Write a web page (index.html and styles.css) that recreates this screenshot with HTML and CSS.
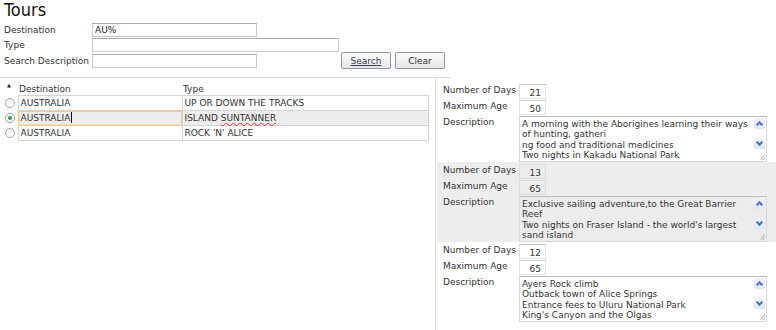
FILE: index.html
```html
<!DOCTYPE html>
<html lang="en">
<head>
  <meta charset="UTF-8">
  <title>Tours</title>
  <link rel="stylesheet" href="styles.css">
</head>
<body>
  <h1 class="title">Tours</h1>

  <div class="search-form">
    <div class="form-row">
      <label>Destination</label>
      <input type="text" class="field-short" value="AU%">
    </div>
    <div class="form-row">
      <label>Type</label>
      <input type="text" class="field-long" value="">
    </div>
    <div class="form-row">
      <label>Search Description</label>
      <input type="text" class="field-short" value="">
      <button class="btn btn-search"><u>Search</u></button>
      <button class="btn">Clear</button>
    </div>
  </div>

  <div class="main">
    <div class="results">
      <table class="grid">
        <tr class="grid-head">
          <th class="col-sel"><span class="sort-arrow">&#9650;</span></th>
          <th class="col-dest">Destination</th>
          <th class="col-type">Type</th>
        </tr>
        <tr>
          <td class="col-sel"><span class="radio"></span></td>
          <td class="cell">AUSTRALIA</td>
          <td class="cell">UP OR DOWN THE TRACKS</td>
        </tr>
        <tr class="current">
          <td class="col-sel"><span class="radio checked"></span></td>
          <td class="cell focused">AUSTRALIA<span class="caret"></span></td>
          <td class="cell">ISLAND <span class="misspelt">SUNTANNER</span></td>
        </tr>
        <tr>
          <td class="col-sel"><span class="radio"></span></td>
          <td class="cell">AUSTRALIA</td>
          <td class="cell">ROCK 'N' ALICE</td>
        </tr>
      </table>
    </div>

    <div class="details">
      <div class="record">
        <div class="rec-row">
          <span class="rec-label">Number of Days</span>
          <span class="num-box">21</span>
        </div>
        <div class="rec-row">
          <span class="rec-label">Maximum Age</span>
          <span class="num-box">50</span>
        </div>
        <div class="rec-row">
          <span class="rec-label">Description</span>
          <div class="memo">
            <div class="memo-text">A morning with the Aborigines learning their ways<br>of hunting, gatheri<br>ng food and traditional medicines<br>Two nights in Kakadu National Park</div>
            <div class="memo-scroll"><span class="arrow up"></span><span class="arrow down"></span><span class="grip"></span></div>
          </div>
        </div>
      </div>

      <div class="record alt">
        <div class="rec-row">
          <span class="rec-label">Number of Days</span>
          <span class="num-box">13</span>
        </div>
        <div class="rec-row">
          <span class="rec-label">Maximum Age</span>
          <span class="num-box">65</span>
        </div>
        <div class="rec-row">
          <span class="rec-label">Description</span>
          <div class="memo">
            <div class="memo-text">Exclusive sailing adventure,to the Great Barrier<br>Reef<br>Two nights on Fraser Island - the world's largest<br>sand island</div>
            <div class="memo-scroll"><span class="arrow up"></span><span class="arrow down"></span><span class="grip"></span></div>
          </div>
        </div>
      </div>

      <div class="record">
        <div class="rec-row">
          <span class="rec-label">Number of Days</span>
          <span class="num-box">12</span>
        </div>
        <div class="rec-row">
          <span class="rec-label">Maximum Age</span>
          <span class="num-box">65</span>
        </div>
        <div class="rec-row">
          <span class="rec-label">Description</span>
          <div class="memo">
            <div class="memo-text">Ayers Rock climb<br>Outback town of Alice Springs<br>Entrance fees to Uluru National Park<br>King's Canyon and the Olgas</div>
            <div class="memo-scroll"><span class="arrow up"></span><span class="arrow down"></span><span class="grip"></span></div>
          </div>
        </div>
      </div>
    </div>
  </div>
</body>
</html>
```

FILE: styles.css
```css
body {
  margin: 0;
  padding: 0;
  background: #fff;
  color: #333;
  font-family: "DejaVu Sans", Verdana, sans-serif;
  font-size: 9px;
  overflow: hidden;
}
.title {
  margin: 0;
  padding: 0 0 0 4px;
  height: 22px;
  font-family: "DejaVu Sans Condensed", "DejaVu Sans", sans-serif;
  font-size: 18px;
  font-weight: normal;
  color: #111;
  line-height: 20px;
}
.search-form {
  width: 446px;
  padding: 0 0 8px 4px;
  border-bottom: 1px solid #ddd;
}
.form-row {
  display: flex;
  align-items: center;
  height: 15px;
}
.form-row:last-child {
  height: 17px;
}
.form-row label {
  width: 88px;
}
.form-row input {
  box-sizing: border-box;
  height: 14px;
  padding: 0 2px;
  border: 1px solid #c8c8c8;
  border-top-color: #aaa;
  font-family: "DejaVu Sans", sans-serif;
  font-size: 9px;
  color: #222;
  outline: none;
}
.field-short {
  width: 165px;
}
.field-long {
  width: 247px;
}
.btn {
  box-sizing: border-box;
  height: 17px;
  width: 50px;
  margin-left: 4px;
  padding: 0;
  border: 1px solid #8d99a8;
  border-radius: 2px;
  background: linear-gradient(#fdfdfd, #e6e6e6);
  font-family: "DejaVu Sans", sans-serif;
  font-size: 9px;
  color: #333;
}
.btn-search {
  margin-left: 84px;
  color: #345;
}
.main {
  display: flex;
  height: 253px;
}
.results {
  width: 436px;
  padding: 4px 0 0 4px;
  box-sizing: border-box;
  border-right: 1px solid #ddd;
}
.grid {
  border-collapse: collapse;
}
.grid th {
  height: 13px;
  padding: 0 0 0 1px;
  text-align: left;
  font-weight: normal;
  vertical-align: bottom;
  line-height: 11px;
}
.grid th.col-sel {
  vertical-align: top;
}
.sort-arrow {
  display: block;
  font-size: 5px;
  line-height: 5px;
  padding: 1px 0 0 2px;
  color: #222;
}
.col-sel {
  width: 13px;
  padding: 0;
}
.col-dest {
  width: 163px;
}
.col-type {
  width: 245px;
}
.grid td.cell {
  height: 14px;
  padding: 0 0 0 2px;
  border: 1px solid #d4d4d4;
  line-height: 14px;
  white-space: nowrap;
}
.grid tr.current td.cell {
  background: #ededed;
}
.grid td.focused {
  outline: 1px solid #f2c691;
  outline-offset: -1px;
  box-shadow: inset 0 0 0 1px #f7dcb8;
}
.caret {
  display: inline-block;
  width: 1px;
  height: 11px;
  margin-left: 1px;
  vertical-align: -2px;
  background: #000;
}
.misspelt {
  text-decoration: underline wavy #e33;
  text-decoration-thickness: 1px;
  text-underline-offset: 1px;
}
.radio {
  display: block;
  box-sizing: border-box;
  width: 10px;
  height: 10px;
  margin-left: 1px;
  border: 1px solid #9aa8b8;
  border-radius: 50%;
  background: linear-gradient(#f4f4f4, #fff);
  position: relative;
}
.radio.checked::after {
  content: "";
  position: absolute;
  left: 2px;
  top: 2px;
  width: 4px;
  height: 4px;
  border-radius: 50%;
  background: #3b9b48;
}
.details {
  flex: 1;
  padding: 4px 0 0 1px;
}
.record {
  height: 80px;
  box-sizing: border-box;
  padding: 2px 0 0 6px;
}
.record.alt {
  background: #ededed;
}
.rec-row {
  display: flex;
  align-items: flex-start;
  margin-bottom: 1px;
}
.rec-label {
  width: 76px;
  line-height: 11px;
  padding-top: 1px;
}
.num-box {
  box-sizing: border-box;
  width: 27px;
  height: 15px;
  padding: 3px 4px 0 0;
  border: 1px solid #e2e2e2;
  border-top-color: #c9c9c9;
  text-align: right;
  line-height: 11px;
  background: #fff;
}
.record.alt .num-box {
  background: #ececec;
  border-color: #ddd;
}
.memo {
  display: flex;
  box-sizing: border-box;
  width: 248px;
  height: 46px;
  border: 1px solid #d8d8d8;
  border-top-color: #bcbcbc;
  background: #fff;
}
.record.alt .memo {
  background: #ececec;
}
.memo-text {
  flex: 1;
  padding: 2px 0 0 2px;
  line-height: 10.4px;
  white-space: nowrap;
  overflow: hidden;
}
.memo-scroll {
  position: relative;
  width: 13px;
}
.arrow {
  position: absolute;
  left: 1px;
  width: 11px;
  height: 11px;
  background: linear-gradient(#f0f3fa, #dde5f4);
  border-radius: 2px;
}
.arrow::after {
  content: "";
  position: absolute;
  left: 3px;
  width: 3px;
  height: 3px;
  border-left: 2px solid #4d6fc4;
  border-top: 2px solid #4d6fc4;
}
.arrow.up {
  top: 1px;
}
.arrow.up::after {
  top: 4px;
  transform: rotate(45deg);
}
.arrow.down {
  top: 21px;
}
.arrow.down::after {
  top: 2px;
  transform: rotate(-135deg);
}
.grip {
  position: absolute;
  right: 1px;
  bottom: 1px;
  width: 6px;
  height: 6px;
  background: linear-gradient(135deg, transparent 50%, #c8c8c8 50%, #c8c8c8 60%, transparent 60%, transparent 75%, #c8c8c8 75%, #c8c8c8 85%, transparent 85%);
}
```
